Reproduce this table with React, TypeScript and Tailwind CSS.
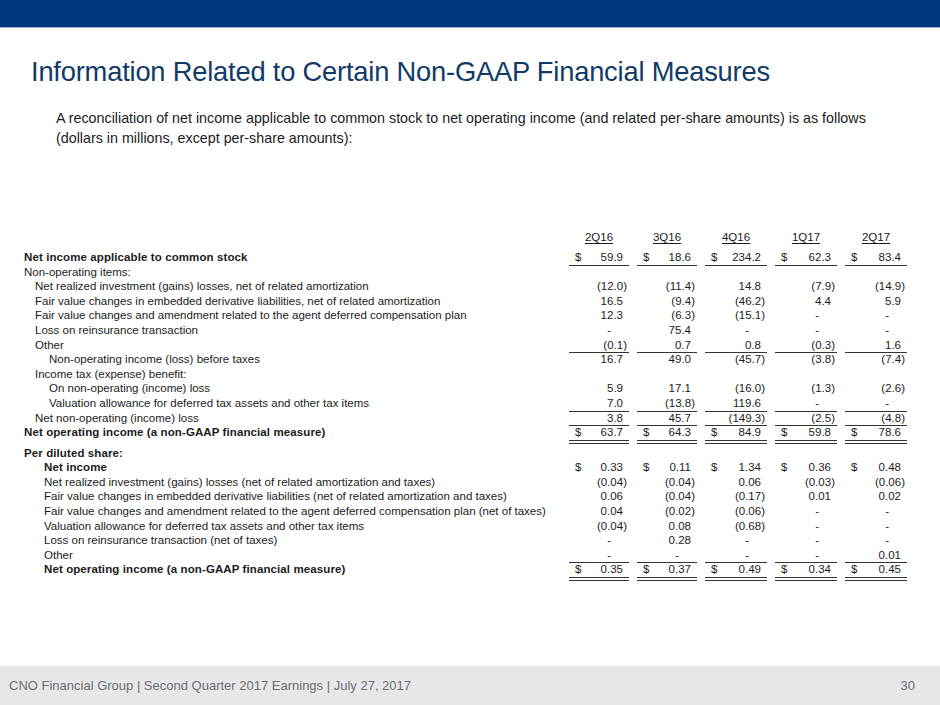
import React from "react";

type Row = {
  label: string;
  indent?: number;
  bold?: boolean;
  values?: string[];
  dollar?: boolean;
  line?: "single" | "double";
  gapTop?: boolean;
};

const quarters = ["2Q16", "3Q16", "4Q16", "1Q17", "2Q17"];

const rows: Row[] = [
  { label: "Net income applicable to common stock", bold: true, dollar: true, line: "single", values: ["59.9", "18.6", "234.2", "62.3", "83.4"] },
  { label: "Non-operating items:" },
  { label: "Net realized investment (gains) losses, net of related amortization", indent: 1, values: ["(12.0)", "(11.4)", "14.8", "(7.9)", "(14.9)"] },
  { label: "Fair value changes in embedded derivative liabilities, net of related amortization", indent: 1, values: ["16.5", "(9.4)", "(46.2)", "4.4", "5.9"] },
  { label: "Fair value changes and amendment related to the agent deferred compensation plan", indent: 1, values: ["12.3", "(6.3)", "(15.1)", "-", "-"] },
  { label: "Loss on reinsurance transaction", indent: 1, values: ["-", "75.4", "-", "-", "-"] },
  { label: "Other", indent: 1, line: "single", values: ["(0.1)", "0.7", "0.8", "(0.3)", "1.6"] },
  { label: "Non-operating income (loss) before taxes", indent: 2, values: ["16.7", "49.0", "(45.7)", "(3.8)", "(7.4)"] },
  { label: "Income tax (expense) benefit:", indent: 1 },
  { label: "On non-operating (income) loss", indent: 2, values: ["5.9", "17.1", "(16.0)", "(1.3)", "(2.6)"] },
  { label: "Valuation allowance for deferred tax assets and other tax items", indent: 2, line: "single", values: ["7.0", "(13.8)", "119.6", "-", "-"] },
  { label: "Net non-operating (income) loss", indent: 1, line: "single", values: ["3.8", "45.7", "(149.3)", "(2.5)", "(4.8)"] },
  { label: "Net operating income (a non-GAAP financial measure)", bold: true, dollar: true, line: "double", values: ["63.7", "64.3", "84.9", "59.8", "78.6"] },
  { label: "Per diluted share:", bold: true, gapTop: true },
  { label: "Net income", indent: 3, bold: true, dollar: true, values: ["0.33", "0.11", "1.34", "0.36", "0.48"] },
  { label: "Net realized investment (gains) losses (net of related amortization and taxes)", indent: 3, values: ["(0.04)", "(0.04)", "0.06", "(0.03)", "(0.06)"] },
  { label: "Fair value changes in embedded derivative liabilities (net of related amortization and taxes)", indent: 3, values: ["0.06", "(0.04)", "(0.17)", "0.01", "0.02"] },
  { label: "Fair value changes and amendment related to the agent deferred compensation plan (net of taxes)", indent: 3, values: ["0.04", "(0.02)", "(0.06)", "-", "-"] },
  { label: "Valuation allowance for deferred tax assets and other tax items", indent: 3, values: ["(0.04)", "0.08", "(0.68)", "-", "-"] },
  { label: "Loss on reinsurance transaction (net of taxes)", indent: 3, values: ["-", "0.28", "-", "-", "-"] },
  { label: "Other", indent: 3, line: "single", values: ["-", "-", "-", "-", "0.01"] },
  { label: "Net operating income (a non-GAAP financial measure)", indent: 3, bold: true, dollar: true, line: "double", values: ["0.35", "0.37", "0.49", "0.34", "0.45"] },
];

const indentClass = ["pl-0", "pl-[11px]", "pl-[25px]", "pl-[20px]"];

function Cell({ value, dollar, line }: { value: string; dollar?: boolean; line?: Row["line"] }) {
  // paren values sit a hair further right, like Excel accounting format
  const pad = value === "-" ? "pr-[18px]" : value.startsWith("(") ? "pr-[2px]" : "pr-[6px]";
  const border =
    line === "single"
      ? "border-b border-[#333]"
      : line === "double"
        ? "border-b-[4px] border-double border-[#333]"
        : "";
  return (
    <div className={`h-full flex items-center justify-between ${border}`}>
      <span className="pl-[6px]">{dollar ? "$" : ""}</span>
      <span className={pad}>{value}</span>
    </div>
  );
}

export default function App() {
  return (
    <div
      className="w-[940px] h-[705px] flex flex-col bg-white text-[#1b1b1b]"
      style={{ fontFamily: '"Liberation Sans", Arial, sans-serif' }}
    >
      <div className="h-[28px] bg-[#00357f] border-b border-[#9fb4d3] shrink-0" />

      <h1 className="mt-[28px] pl-[31px] text-[27.3px] leading-[32px] text-[#123a66] tracking-[-0.2px]">
        Information Related to Certain Non-GAAP Financial Measures
      </h1>

      <p className="mt-[20px] pl-[56px] text-[14.3px] leading-[20px] text-[#1b1b1b] whitespace-nowrap">
        A reconciliation of net income applicable to common stock to net operating income (and related per-share amounts) is as follows
        <br />
        (dollars in millions, except per-share amounts):
      </p>

      {/* Table */}
      <div className="mt-[82px] pl-[24px] text-[11.5px]">
        <div className="grid grid-cols-[537px_60px_60px_62px_62px_62px] gap-x-2 h-[14.6px] mb-[5.4px] leading-[14.6px]">
          <div />
          {quarters.map((q) => (
            <div key={q} className="text-center underline underline-offset-2">
              {q}
            </div>
          ))}
        </div>

        {rows.map((r, i) => (
          <div
            key={i}
            className={`grid grid-cols-[537px_60px_60px_62px_62px_62px] gap-x-2 h-[14.6px] leading-[14.6px] ${r.gapTop ? "mt-[6px]" : ""}`}
          >
            <div className={`whitespace-nowrap ${indentClass[r.indent ?? 0]} ${r.bold ? "font-bold tracking-[0.1px]" : ""}`}>
              {r.label}
            </div>
            {r.values
              ? r.values.map((v, j) => <Cell key={j} value={v} dollar={r.dollar} line={r.line} />)
              : null}
          </div>
        ))}
      </div>

      <div className="mt-auto h-[39px] bg-[#e6e7e9] flex items-center justify-between pl-[9px] pr-[25px] text-[13px] text-[#6d6e71] shrink-0">
        <span>CNO Financial Group | Second Quarter 2017 Earnings | July 27, 2017</span>
        <span>30</span>
      </div>
    </div>
  );
}
